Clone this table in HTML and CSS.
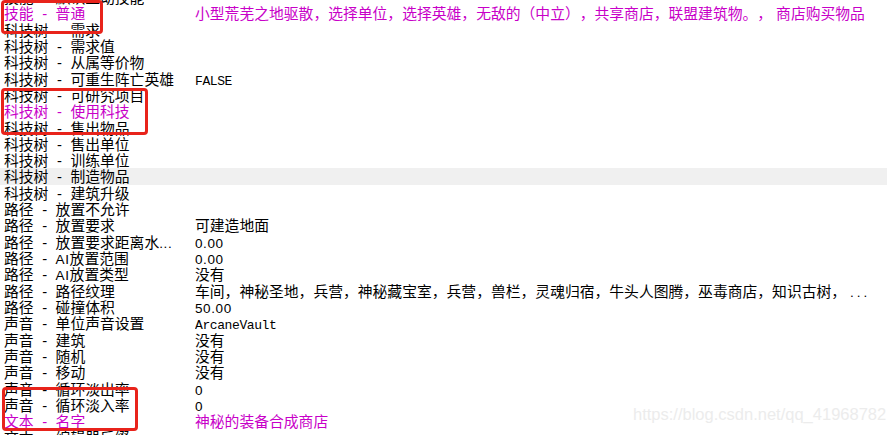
FILE: index.html
```html
<!DOCTYPE html>
<html lang="zh">
<head>
<meta charset="utf-8">
<title>物体编辑器</title>
<link rel="stylesheet" href="styles.css">
</head>
<body>
<div class="grid">
  <div class="row"><span class="label">技能<span class="sep"> - </span>默认主动技能</span><span class="value"></span></div>
  <div class="row mod"><span class="label">技能<span class="sep"> - </span>普通</span><span class="value">小型荒芜之地驱散，选择单位，选择英雄，无敌的（中立），共享商店，联盟建筑物。，<span class="gap"></span>商店购买物品</span></div>
  <div class="row"><span class="label">科技树<span class="sep"> - </span>需求</span><span class="value"></span></div>
  <div class="row"><span class="label">科技树<span class="sep"> - </span>需求值</span><span class="value"></span></div>
  <div class="row"><span class="label">科技树<span class="sep"> - </span>从属等价物</span><span class="value"></span></div>
  <div class="row"><span class="label">科技树<span class="sep"> - </span>可重生阵亡英雄</span><span class="value"><span class="mono">FALSE</span></span></div>
  <div class="row"><span class="label">科技树<span class="sep"> - </span>可研究项目</span><span class="value"></span></div>
  <div class="row mod"><span class="label">科技树<span class="sep"> - </span>使用科技</span><span class="value"></span></div>
  <div class="row"><span class="label">科技树<span class="sep"> - </span>售出物品</span><span class="value"></span></div>
  <div class="row"><span class="label">科技树<span class="sep"> - </span>售出单位</span><span class="value"></span></div>
  <div class="row"><span class="label">科技树<span class="sep"> - </span>训练单位</span><span class="value"></span></div>
  <div class="row selected"><span class="label">科技树<span class="sep"> - </span>制造物品</span><span class="value"></span></div>
  <div class="row"><span class="label">科技树<span class="sep"> - </span>建筑升级</span><span class="value"></span></div>
  <div class="row"><span class="label">路径<span class="sep"> - </span>放置不允许</span><span class="value"></span></div>
  <div class="row"><span class="label">路径<span class="sep"> - </span>放置要求</span><span class="value">可建造地面</span></div>
  <div class="row"><span class="label">路径<span class="sep"> - </span>放置要求距离水<span class="num">...</span></span><span class="value"><span class="num">0.00</span></span></div>
  <div class="row"><span class="label">路径<span class="sep"> - </span><span class="num">AI</span>放置范围</span><span class="value"><span class="num">0.00</span></span></div>
  <div class="row"><span class="label">路径<span class="sep"> - </span><span class="num">AI</span>放置类型</span><span class="value">没有</span></div>
  <div class="row"><span class="label">路径<span class="sep"> - </span>路径纹理</span><span class="value">车间，神秘圣地，兵营，神秘藏宝室，兵营，兽栏，灵魂归宿，牛头人图腾，巫毒商店，知识古树，<span class="num dots">...</span></span></div>
  <div class="row"><span class="label">路径<span class="sep"> - </span>碰撞体积</span><span class="value"><span class="num">50.00</span></span></div>
  <div class="row"><span class="label">声音<span class="sep"> - </span>单位声音设置</span><span class="value"><span class="mono">ArcaneVault</span></span></div>
  <div class="row"><span class="label">声音<span class="sep"> - </span>建筑</span><span class="value">没有</span></div>
  <div class="row"><span class="label">声音<span class="sep"> - </span>随机</span><span class="value">没有</span></div>
  <div class="row"><span class="label">声音<span class="sep"> - </span>移动</span><span class="value">没有</span></div>
  <div class="row"><span class="label">声音<span class="sep"> - </span>循环淡出率</span><span class="value"><span class="num">0</span></span></div>
  <div class="row"><span class="label">声音<span class="sep"> - </span>循环淡入率</span><span class="value"><span class="num">0</span></span></div>
  <div class="row mod"><span class="label">文本<span class="sep"> - </span>名字</span><span class="value">神秘的装备合成商店</span></div>
  <div class="row"><span class="label">文本<span class="sep"> - </span>编辑器后缀</span><span class="value"></span></div>
</div>
<div class="mark mark-1"></div>
<div class="mark mark-2"></div>
<div class="mark mark-3"></div>
<div class="watermark">https://blog.csdn.net/qq_41968782</div>
</body>
</html>
```

FILE: styles.css
```css
html, body {
  margin: 0;
  padding: 0;
  background: #ffffff;
  overflow: hidden;
}

body {
  position: relative;
  width: 887px;
  height: 435px;
  font-family: "Noto Sans CJK SC", "Noto Sans", sans-serif;
  font-size: 14.8px;
  color: #000000;
  text-spacing-trim: space-all;
  font-feature-settings: "halt" 0, "palt" 0;
}

.grid {
  display: flex;
  flex-direction: column;
  margin-top: -11px;
}

.row {
  display: flex;
  height: 16.32px;
  line-height: 16.32px;
  white-space: pre;
}

.row.selected {
  background: #f0f0f0;
}

.row.mod {
  color: #c800c8;
}

.label {
  width: 191px;
  padding-left: 4px;
  flex: none;
  overflow: hidden;
}

.value {
  flex: 1;
  overflow: hidden;
}

.sep {
  display: inline-block;
  width: 22px;
  text-align: center;
  font-family: "Liberation Sans", sans-serif;
}

.gap {
  display: inline-block;
  width: 4px;
}

.num {
  font-family: "Liberation Sans", sans-serif;
  font-size: 13.5px;
  letter-spacing: 0.6px;
}

.dots {
  letter-spacing: 3px;
  padding-left: 4px;
}

.mono {
  font-family: "Liberation Mono", monospace;
  font-size: 13px;
  letter-spacing: -0.4px;
}

.mark {
  position: absolute;
  border: 3px solid #e8231b;
  border-radius: 4px;
  box-sizing: border-box;
}

.mark-1 {
  left: 1px;
  top: 0;
  width: 102px;
  height: 34px;
}

.mark-2 {
  left: 1px;
  top: 88px;
  width: 147px;
  height: 47px;
}

.mark-3 {
  left: 2px;
  top: 387px;
  width: 136px;
  height: 44px;
}

.watermark {
  position: absolute;
  left: 633px;
  top: 405px;
  font-family: "Liberation Sans", sans-serif;
  font-size: 16.5px;
  color: #ececec;
  white-space: nowrap;
}
```
